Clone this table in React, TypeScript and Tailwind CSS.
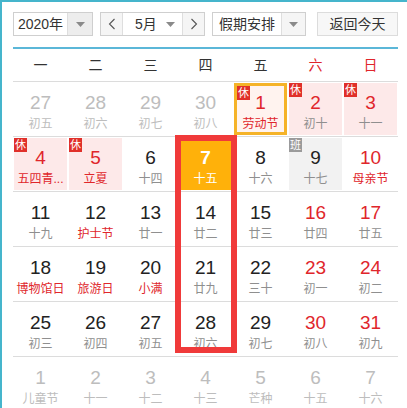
import React from "react";

type Day = {
  n: number;
  l: string;
  other?: boolean;
  red?: boolean;
  lred?: boolean;
  rest?: boolean;
  work?: boolean;
  today?: boolean;
  sel?: boolean;
};

const rows: Day[][] = [
  [
    { n: 27, l: "初五", other: true },
    { n: 28, l: "初六", other: true },
    { n: 29, l: "初七", other: true },
    { n: 30, l: "初八", other: true },
    { n: 1, l: "劳动节", red: true, lred: true, rest: true, sel: true },
    { n: 2, l: "初十", red: true, rest: true },
    { n: 3, l: "十一", red: true, rest: true },
  ],
  [
    { n: 4, l: "五四青...", red: true, lred: true, rest: true },
    { n: 5, l: "立夏", red: true, lred: true, rest: true },
    { n: 6, l: "十四" },
    { n: 7, l: "十五", today: true },
    { n: 8, l: "十六" },
    { n: 9, l: "十七", work: true },
    { n: 10, l: "母亲节", red: true, lred: true },
  ],
  [
    { n: 11, l: "十九" },
    { n: 12, l: "护士节", lred: true },
    { n: 13, l: "廿一" },
    { n: 14, l: "廿二" },
    { n: 15, l: "廿三" },
    { n: 16, l: "廿四", red: true },
    { n: 17, l: "廿五", red: true },
  ],
  [
    { n: 18, l: "博物馆日", lred: true },
    { n: 19, l: "旅游日", lred: true },
    { n: 20, l: "小满", lred: true },
    { n: 21, l: "廿九" },
    { n: 22, l: "三十" },
    { n: 23, l: "初一", red: true },
    { n: 24, l: "初二", red: true },
  ],
  [
    { n: 25, l: "初三" },
    { n: 26, l: "初四" },
    { n: 27, l: "初五" },
    { n: 28, l: "初六" },
    { n: 29, l: "初七" },
    { n: 30, l: "初八", red: true },
    { n: 31, l: "初九", red: true },
  ],
  [
    { n: 1, l: "儿童节", other: true },
    { n: 2, l: "十一", other: true },
    { n: 3, l: "十二", other: true },
    { n: 4, l: "十三", other: true },
    { n: 5, l: "芒种", other: true },
    { n: 6, l: "十五", other: true },
    { n: 7, l: "十六", other: true },
  ],
];

const weekdays = ["一", "二", "三", "四", "五", "六", "日"];

function Caret() {
  return (
    <svg width="9" height="5" viewBox="0 0 9 5">
      <path d="M0 0h9L4.5 5z" fill="#8a8a8a" />
    </svg>
  );
}

function Chevron({ dir }: { dir: "l" | "r" }) {
  return (
    <svg width="8" height="12" viewBox="0 0 8 12">
      <path
        d={dir === "l" ? "M6.5 1L1.5 6l5 5" : "M1.5 1l5 5-5 5"}
        fill="none"
        stroke="#555"
        strokeWidth="1.1"
      />
    </svg>
  );
}

function Cell({ d }: { d: Day }) {
  let bg = "";
  if (d.rest) bg = "bg-[#fde9e9]";
  if (d.sel) bg = "bg-[#fff3ef] border-[3px] border-[#f5b328]";
  if (d.work) bg = "bg-[#f2f2f2]";
  if (d.today) bg = "bg-[#ffb10a]";

  let num = "text-[#222]";
  if (d.red) num = "text-[#e0262b]";
  if (d.other) num = "text-[#bdbdbd]";
  if (d.today) num = "text-white";

  let lun = "text-[#8f8f8f]";
  if (d.lred) lun = "text-[#e0262b]";
  if (d.other) lun = "text-[#bdbdbd]";
  if (d.today) lun = "text-white";

  return (
    <div className="p-[1px] h-full">
      <div className={`relative h-full flex flex-col items-center ${bg}`}>
        {(d.rest || d.work) && (
          <span
            className={`absolute left-0 top-0 w-[13px] h-[14px] flex items-center justify-center text-[11px] leading-none text-white ${
              d.work ? "bg-[#9b9b9b]" : "bg-[#e0302a]"
            } ${d.sel ? "-left-[3px] -top-[3px]" : ""}`}
          >
            {d.work ? "班" : "休"}
          </span>
        )}
        <span
          className={`text-[19px] leading-none ${num} ${d.sel ? "mt-[7px]" : "mt-[10px]"} ${
            d.today ? "font-bold" : ""
          }`}
        >
          {d.n}
        </span>
        <span className={`text-[12px] leading-none mt-[6px] whitespace-nowrap ${lun}`}>{d.l}</span>
      </div>
    </div>
  );
}

export default function App() {
  return (
    <div
      className="w-[407px] h-[408px] overflow-hidden bg-white border-l-2 border-t-2 border-[#45b5cc] pl-[11px] pt-[10px]"
      style={{ fontFamily: "Arial, 'Liberation Sans', 'Noto Sans CJK SC', sans-serif" }}
    >
      <div className="w-[385px]">
        <div className="flex items-center h-[24px] text-[14px] text-[#333]">
          <div className="flex h-full w-[80px] border border-[#cfcfcf] bg-white">
            <div className="flex-1 flex items-center justify-center">2020年</div>
            <div className="w-[25px] flex items-center justify-center bg-[#ededed] border-l border-[#dedede]">
              <Caret />
            </div>
          </div>
          <div className="flex h-full w-[105px] ml-[7px] border border-[#cfcfcf] bg-white">
            <div className="w-[22px] flex items-center justify-center bg-[#f5f5f5] border-r border-[#dedede]">
              <Chevron dir="l" />
            </div>
            <div className="flex-1 flex items-center justify-between pl-[12px] pr-[7px]">
              <span>5月</span>
              <Caret />
            </div>
            <div className="w-[22px] flex items-center justify-center bg-[#f5f5f5] border-l border-[#dedede]">
              <Chevron dir="r" />
            </div>
          </div>
          <div className="flex h-full w-[94px] ml-[7px] border border-[#cfcfcf] bg-white">
            <div className="flex-1 flex items-center justify-center">假期安排</div>
            <div className="w-[24px] flex items-center justify-center bg-[#f5f5f5] border-l border-[#dedede]">
              <Caret />
            </div>
          </div>
          <div className="h-full w-[81px] ml-auto flex items-center justify-center border border-[#dcdcdc] bg-[#f7f7f7]">
            返回今天
          </div>
        </div>

        <div className="mt-[11px] h-[2px] bg-[#5bb7d8]" />

        <div className="grid grid-cols-7 h-[33px] border-b border-[#dcdcdc] text-[14px] items-center text-center">
          {weekdays.map((w, i) => (
            <span key={w} className={i >= 5 ? "text-[#e0262b]" : "text-[#333]"}>
              {w}
            </span>
          ))}
        </div>

        <div className="relative">
          {rows.map((r, i) => (
            <div key={i} className="grid grid-cols-7 h-[55px] border-b border-[#dcdcdc]">
              {r.map((d, j) => (
                <Cell key={j} d={d} />
              ))}
            </div>
          ))}
          <div className="absolute left-[162px] top-[53px] w-[62px] h-[218px] border-[6px] border-[#f03a3a]" />
        </div>
      </div>
    </div>
  );
}
